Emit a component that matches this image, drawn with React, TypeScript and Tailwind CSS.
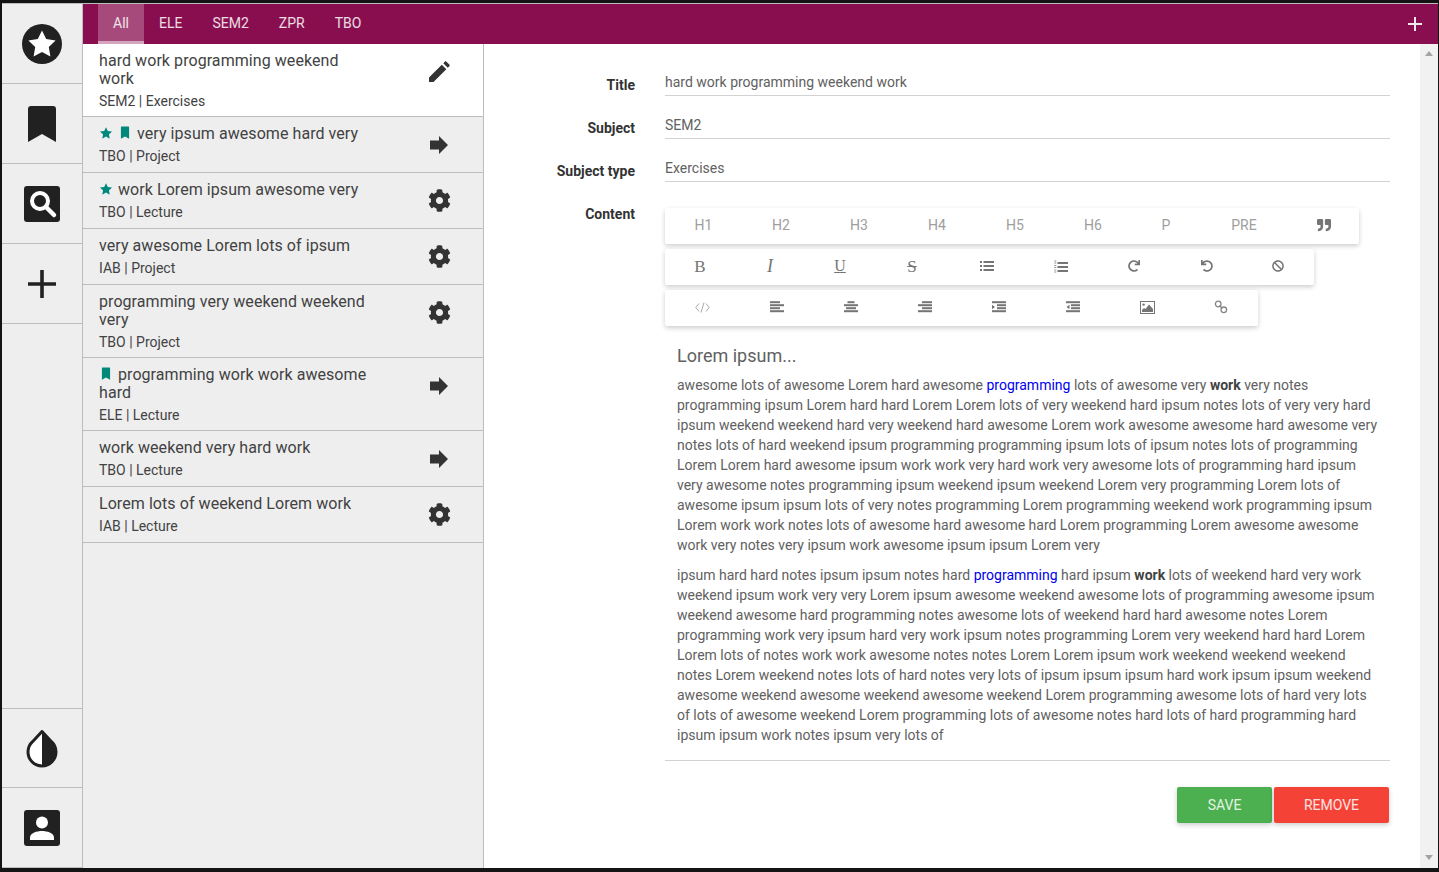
import React from "react";
import { FaCog, FaRedo, FaUndo, FaBan, FaQuoteRight } from "react-icons/fa";

const font = { fontFamily: "Roboto, 'Liberation Sans', sans-serif" };
const serif = { fontFamily: "'Liberation Serif', serif" };

const StarMini = () => (
  <svg viewBox="0 0 24 24" className="inline-block w-[14px] h-[14px] fill-[#00897b] align-[-1px]">
    <path d="M12 2l3.1 6.6 7.2.9-5.3 5 1.4 7.2L12 18.2l-6.4 3.5L7 14.5l-5.3-5 7.2-.9z" />
  </svg>
);
const BookMini = () => (
  <svg viewBox="0 0 24 24" className="inline-block w-[14px] h-[14px] fill-[#00897b] align-[-1px]">
    <path d="M6 1h12a1 1 0 0 1 1 1v20l-7-4-7 4V2a1 1 0 0 1 1-1z" />
  </svg>
);
const Pencil = () => (
  <svg viewBox="0 0 22 22" className="w-[22px] h-[22px] fill-[#333]">
    <path d="M1 16.5L13.8 3.7l4.5 4.5L5.5 21H1zM15.3 2.2l1.5-1.5c.5-.5 1.2-.5 1.6 0l2.9 2.9c.5.5.5 1.2 0 1.6l-1.5 1.5z" />
  </svg>
);
const Arrow = () => (
  <svg viewBox="0 0 18 18" className="w-[18px] h-[18px] fill-[#333]">
    <path d="M0 4.5h9V0l9 9-9 9v-4.5H0z" />
  </svg>
);

const Bars = ({ bars, extra }: { bars: [number, number][]; extra?: React.ReactNode }) => (
  <svg viewBox="0 0 14 12" className="w-[14px] h-[12px] fill-[#757575]">
    {bars.map(([x, w], i) => (
      <rect key={i} x={x} y={i * 3 + 0.2} width={w} height="2" />
    ))}
    {extra}
  </svg>
);

const UlIcon = () => (
  <svg viewBox="0 0 14 10" className="w-[14px] h-[10px] fill-[#757575]">
    {[0, 4, 8].map((y) => (
      <g key={y}>
        <rect x="0" y={y} width="2" height="2" />
        <rect x="3.5" y={y} width="10.5" height="2" />
      </g>
    ))}
  </svg>
);
const OlIcon = () => (
  <svg viewBox="0 0 14 13" className="w-[14px] h-[13px] fill-[#757575]">
    {[2, 6, 10].map((y) => (
      <rect key={y} x="3.5" y={y} width="10.5" height="2" />
    ))}
    {[0.5, 2.5, 5, 7, 9.5, 11.5].map((y) => (
      <rect key={y} x="0.3" y={y} width="2" height="1" opacity="0.8" />
    ))}
  </svg>
);
const CodeIcon = () => (
  <svg viewBox="0 0 15 11" className="w-[15px] h-[11px] fill-none stroke-[#9e9e9e]" strokeWidth="0.9">
    <path d="M4 1.5L0.8 5.5 4 9.5M11 1.5l3.2 4-3.2 4M9 .5l-3 10" />
  </svg>
);
const ImageIcon = () => (
  <svg viewBox="0 0 15 13" className="w-[15px] h-[13px]">
    <rect x="0.5" y="0.5" width="14" height="12" fill="#fff" stroke="#757575" />
    <circle cx="3.6" cy="3.6" r="1.2" fill="#757575" />
    <path d="M2 11V9l2-2 1.5 1L9 3.5 13 8v3z" fill="#757575" />
  </svg>
);
const LinkIcon = () => (
  <svg viewBox="0 0 14 14" className="w-[14px] h-[14px] fill-none stroke-[#858585]" strokeWidth="1.3">
    <circle cx="4.2" cy="4" r="2.8" />
    <circle cx="9.8" cy="9.8" r="2.8" />
    <path d="M5.5 5.5l3 3" />
  </svg>
);

type Row = { t: string; s: string; star?: boolean; book?: boolean; icon: "pencil" | "arrow" | "cog"; active?: boolean; two?: boolean };
const rows: Row[] = [
  { t: "hard work programming weekend work", s: "SEM2 | Exercises", icon: "pencil", active: true, two: true },
  { t: "very ipsum awesome hard very", s: "TBO | Project", icon: "arrow", star: true, book: true },
  { t: "work Lorem ipsum awesome very", s: "TBO | Lecture", icon: "cog", star: true },
  { t: "very awesome Lorem lots of ipsum", s: "IAB | Project", icon: "cog" },
  { t: "programming very weekend weekend very", s: "TBO | Project", icon: "cog", two: true },
  { t: "programming work work awesome hard", s: "ELE | Lecture", icon: "arrow", book: true, two: true },
  { t: "work weekend very hard work", s: "TBO | Lecture", icon: "arrow" },
  { t: "Lorem lots of weekend Lorem work", s: "IAB | Lecture", icon: "cog" },
];

const Prog = () => <a className="text-[#0000ee]">programming</a>;
const W = () => <b className="font-bold text-[#424242]">work</b>;

const tb = "flex h-9 items-center bg-white rounded-[2px] shadow-[0_2px_5px_rgba(0,0,0,0.2)] text-[#9e9e9e] text-sm";
const Btn = ({ w, children }: { w: string; children: React.ReactNode }) => (
  <div className={`${w} flex items-center justify-center h-full pb-[2px]`}>{children}</div>
);

function Field({ label, value }: { label: string; value: string }) {
  return (
    <div className="flex mb-[17px]">
      <div className="w-[151px] pt-[5px] text-right text-sm leading-5 font-bold text-[#333]">{label}</div>
      <div className="ml-[30px] flex-1 h-[26px] pt-[2px] border-b border-[#d2d2d2] text-sm leading-5 text-[#616161]">{value}</div>
    </div>
  );
}

const SideItem = ({ children, className = "h-20" }: { children: React.ReactNode; className?: string }) => (
  <div className={`${className} flex items-center justify-center border-b border-[#bdbdbd]`}>{children}</div>
);

export default function App() {
  return (
    <div style={font} className="h-[872px] w-[1439px] overflow-hidden bg-[#141414] pt-[3px] pl-[2px] pr-px pb-1">
      <div className="h-[865px] flex flex-col">
        <div className="h-px bg-[#bdbdbd] shrink-0" />
        <div className="flex flex-1 min-h-0">
          <aside className="w-[81px] bg-[#eeeeee] border-r border-[#bdbdbd] flex flex-col justify-between">
            <div>
              <SideItem>
                <svg viewBox="0 0 40 40" className="w-10 h-10">
                  <circle cx="20" cy="20" r="20" fill="#212121" />
                  <path d="M20 6.5l4.2 8.6 9.4 1.3-6.8 6.6 1.6 9.4-8.4-4.4-8.4 4.4 1.6-9.4-6.8-6.6 9.4-1.3z" fill="#ffffff" />
                </svg>
              </SideItem>
              <SideItem>
                <svg viewBox="0 0 28 36" className="w-7 h-9">
                  <path d="M3 0h22a3 3 0 0 1 3 3v33l-14-8-14 8V3a3 3 0 0 1 3-3z" fill="#212121" />
                </svg>
              </SideItem>
              <SideItem>
                <svg viewBox="0 0 36 36" className="w-9 h-9">
                  <rect width="36" height="36" rx="3" fill="#212121" />
                  <circle cx="16" cy="15" r="8" fill="none" stroke="#ffffff" strokeWidth="4" />
                  <path d="M22 21l8 8" stroke="#ffffff" strokeWidth="4.5" strokeLinecap="round" />
                </svg>
              </SideItem>
              <SideItem>
                <svg viewBox="0 0 28 28" className="w-7 h-7">
                  <path d="M12.2 0h3.6v12.2H28v3.6H15.8V28h-3.6V15.8H0v-3.6h12.2z" fill="#212121" />
                </svg>
              </SideItem>
            </div>
            <div className="border-t border-[#bdbdbd]">
              <SideItem className="h-[79px]">
                <svg viewBox="0 0 32 38" className="w-8 h-[38px] mt-[2px]">
                  <path d="M16 1.5l9.5 10.2a14 14 0 1 1-19 0z" fill="#ffffff" stroke="#212121" strokeWidth="3" strokeLinejoin="round" />
                  <path d="M16 1l10 10.5A14.8 14.8 0 0 1 16 37z" fill="#212121" />
                </svg>
              </SideItem>
              <SideItem>
                <svg viewBox="0 0 36 36" className="w-9 h-9">
                  <rect width="36" height="36" rx="3" fill="#212121" />
                  <circle cx="18" cy="12.5" r="6" fill="#ffffff" />
                  <path d="M6 30v-2.5C6 23 13 21 18 21s12 2 12 6.5V30z" fill="#ffffff" />
                </svg>
              </SideItem>
            </div>
          </aside>

          <main className="flex-1 min-w-0 flex flex-col">
            <header className="h-10 shrink-0 bg-[#880e4f] flex items-stretch pl-[15px] pr-[16px] text-sm text-white/85">
              {["All", "ELE", "SEM2", "ZPR", "TBO"].map((t, i) => (
                <div
                  key={t}
                  className={`px-[15px] flex items-center justify-center border-b-[3px] pt-[1px] ${i === 0 ? "bg-white/25 border-[#d4a5bf]" : "border-transparent"}`}
                >
                  {t}
                </div>
              ))}
              <div className="ml-auto flex items-center">
                <svg viewBox="0 0 14 14" className="w-[14px] h-[14px]">
                  <path d="M6 0h2v6h6v2H8v6H6V8H0V6h6z" fill="#f3e5ec" />
                </svg>
              </div>
            </header>

            <div className="flex flex-1 min-h-0">
              <section className="w-[401px] shrink-0 bg-[#eeeeee] border-r border-[#bdbdbd]">
                {rows.map((r) => (
                  <div key={r.t} className={`flex items-start border-b border-[#bdbdbd] ${r.two ? "h-[73px]" : "h-[56px]"} ${r.active ? "bg-white" : ""}`}>
                    <div className="ml-4 w-[270px] pt-2">
                      <div className="text-base leading-[18px] tracking-[0.065px] text-[#424242]">
                        {r.star && (
                          <span className="inline-block w-[19px]">
                            <StarMini />
                          </span>
                        )}
                        {r.book && (
                          <span className="inline-block w-[19px]">
                            <BookMini />
                          </span>
                        )}
                        {r.t}
                      </div>
                      <div className="mt-[3px] text-sm leading-5 text-[#424242]">{r.s}</div>
                    </div>
                    <div className="ml-auto w-[88px] h-[55px] flex items-center justify-center">
                      {r.icon === "pencil" && <Pencil />}
                      {r.icon === "arrow" && <Arrow />}
                      {r.icon === "cog" && <FaCog className="w-[23px] h-[23px] text-[#333]" />}
                    </div>
                  </div>
                ))}
              </section>

              <section className="flex-1 min-w-0 flex bg-white">
                <div className="flex-1 min-w-0 pt-[26px] pr-[30px]">
                  <Field label="Title" value="hard work programming weekend work" />
                  <Field label="Subject" value="SEM2" />
                  <Field label="Subject type" value="Exercises" />
                  <div className="flex">
                    <div className="w-[151px] pt-[5px] text-right text-sm leading-5 font-bold text-[#333]">Content</div>
                    <div className="ml-[30px] flex-1 min-w-0 pt-[9px]">
                      <div className="flex flex-col gap-[5px] items-start">
                        <div className={tb}>
                          <Btn w="w-[77px]">H1</Btn>
                          {["H2", "H3", "H4", "H5", "H6"].map((h) => (
                            <Btn key={h} w="w-[78px]">{h}</Btn>
                          ))}
                          <Btn w="w-[68px]">P</Btn>
                          <Btn w="w-[88px]">PRE</Btn>
                          <Btn w="w-[71px]"><FaQuoteRight className="text-[#757575] text-[14px]" /></Btn>
                        </div>
                        <div className={tb}>
                          <Btn w="w-[70px]"><span className="text-[#757575] text-[17px] font-normal leading-none" style={serif}>B</span></Btn>
                          <Btn w="w-[70px]"><span className="text-[#757575] text-[18px] italic leading-none" style={serif}>I</span></Btn>
                          <Btn w="w-[70px]"><span className="text-[#757575] text-[16px] underline leading-none" style={serif}>U</span></Btn>
                          <Btn w="w-[74px]"><span className="text-[#757575] text-[17px] line-through leading-none" style={serif}>S</span></Btn>
                          <Btn w="w-[76px]"><UlIcon /></Btn>
                          <Btn w="w-[72px]"><OlIcon /></Btn>
                          <Btn w="w-[74px]"><FaRedo className="text-[#757575] text-[12px]" /></Btn>
                          <Btn w="w-[71px]"><FaUndo className="text-[#757575] text-[12px]" /></Btn>
                          <Btn w="w-[72px]"><FaBan className="text-[#757575] text-[12px]" /></Btn>
                        </div>
                        <div className={tb}>
                          <Btn w="w-[75px]"><CodeIcon /></Btn>
                          <Btn w="w-[74px]"><Bars bars={[[0, 10], [0, 14], [0, 10], [0, 14]]} /></Btn>
                          <Btn w="w-[74px]"><Bars bars={[[3.5, 7], [0, 14], [2, 10], [0, 14]]} /></Btn>
                          <Btn w="w-[74px]"><Bars bars={[[4, 10], [0, 14], [4, 10], [0, 14]]} /></Btn>
                          <Btn w="w-[74px]"><Bars bars={[[0, 14], [5, 9], [5, 9], [0, 14]]} extra={<path d="M0 3.7l3 2.3-3 2.3z" />} /></Btn>
                          <Btn w="w-[74px]"><Bars bars={[[0, 14], [5, 9], [5, 9], [0, 14]]} extra={<path d="M3.5 3.7L0.5 6l3 2.3z" />} /></Btn>
                          <Btn w="w-[74px]"><ImageIcon /></Btn>
                          <Btn w="w-[74px]"><LinkIcon /></Btn>
                        </div>
                      </div>
                      <div className="border-b border-[#d2d2d2] px-3 pt-5 pb-[15px] text-sm leading-5 text-[#616161]">
                        <div className="text-lg leading-5 mb-[9px]">Lorem ipsum...</div>
                        <p className="mb-[10px]">
                          awesome lots of awesome Lorem hard awesome <Prog /> lots of awesome very <W /> very notes programming ipsum Lorem hard hard Lorem Lorem lots of very weekend hard ipsum notes lots of very very hard ipsum weekend weekend hard very weekend hard awesome Lorem work awesome awesome hard awesome very notes lots of hard weekend ipsum programming programming ipsum lots of ipsum notes lots of programming Lorem Lorem hard awesome ipsum work work very hard work very awesome lots of programming hard ipsum very awesome notes programming ipsum weekend ipsum weekend Lorem very programming Lorem lots of awesome ipsum ipsum lots of very notes programming Lorem programming weekend work programming ipsum Lorem work work notes lots of awesome hard awesome hard Lorem programming Lorem awesome awesome work very notes very ipsum work awesome ipsum ipsum Lorem very
                        </p>
                        <p>
                          ipsum hard hard notes ipsum ipsum notes hard <Prog /> hard ipsum <W /> lots of weekend hard very work weekend ipsum work very very Lorem ipsum awesome weekend awesome lots of programming awesome ipsum weekend awesome hard programming notes awesome lots of weekend hard hard awesome notes Lorem programming work very ipsum hard very work ipsum notes programming Lorem very weekend hard hard Lorem Lorem lots of notes work work awesome notes notes Lorem Lorem ipsum work weekend weekend weekend notes Lorem weekend notes lots of hard notes very lots of ipsum ipsum ipsum hard work ipsum ipsum weekend awesome weekend awesome weekend awesome weekend Lorem programming awesome lots of hard very lots of lots of awesome weekend Lorem programming lots of awesome notes hard lots of hard programming hard ipsum ipsum work notes ipsum very lots of
                        </p>
                      </div>
                      <div className="flex justify-end gap-[2px] mt-[26px] pr-px">
                        <button className="w-[95px] h-9 pb-px rounded-[2px] bg-[#4caf50] text-sm text-white/85 shadow-[0_2px_5px_rgba(0,0,0,0.2)]">SAVE</button>
                        <button className="w-[115px] h-9 pb-px rounded-[2px] bg-[#f44336] text-sm text-white/85 shadow-[0_2px_5px_rgba(0,0,0,0.2)]">REMOVE</button>
                      </div>
                    </div>
                  </div>
                </div>
                <div className="w-[18px] shrink-0 bg-[#f1f1f1] flex flex-col items-center justify-between pt-[7px] pb-[8px]">
                  <svg viewBox="0 0 8 5" className="w-2 h-[5px]"><path d="M4 0l4 5H0z" fill="#a3a3a3" /></svg>
                  <svg viewBox="0 0 8 5" className="w-2 h-[5px]"><path d="M0 0h8L4 5z" fill="#a3a3a3" /></svg>
                </div>
              </section>
            </div>
          </main>
        </div>
      </div>
    </div>
  );
}
